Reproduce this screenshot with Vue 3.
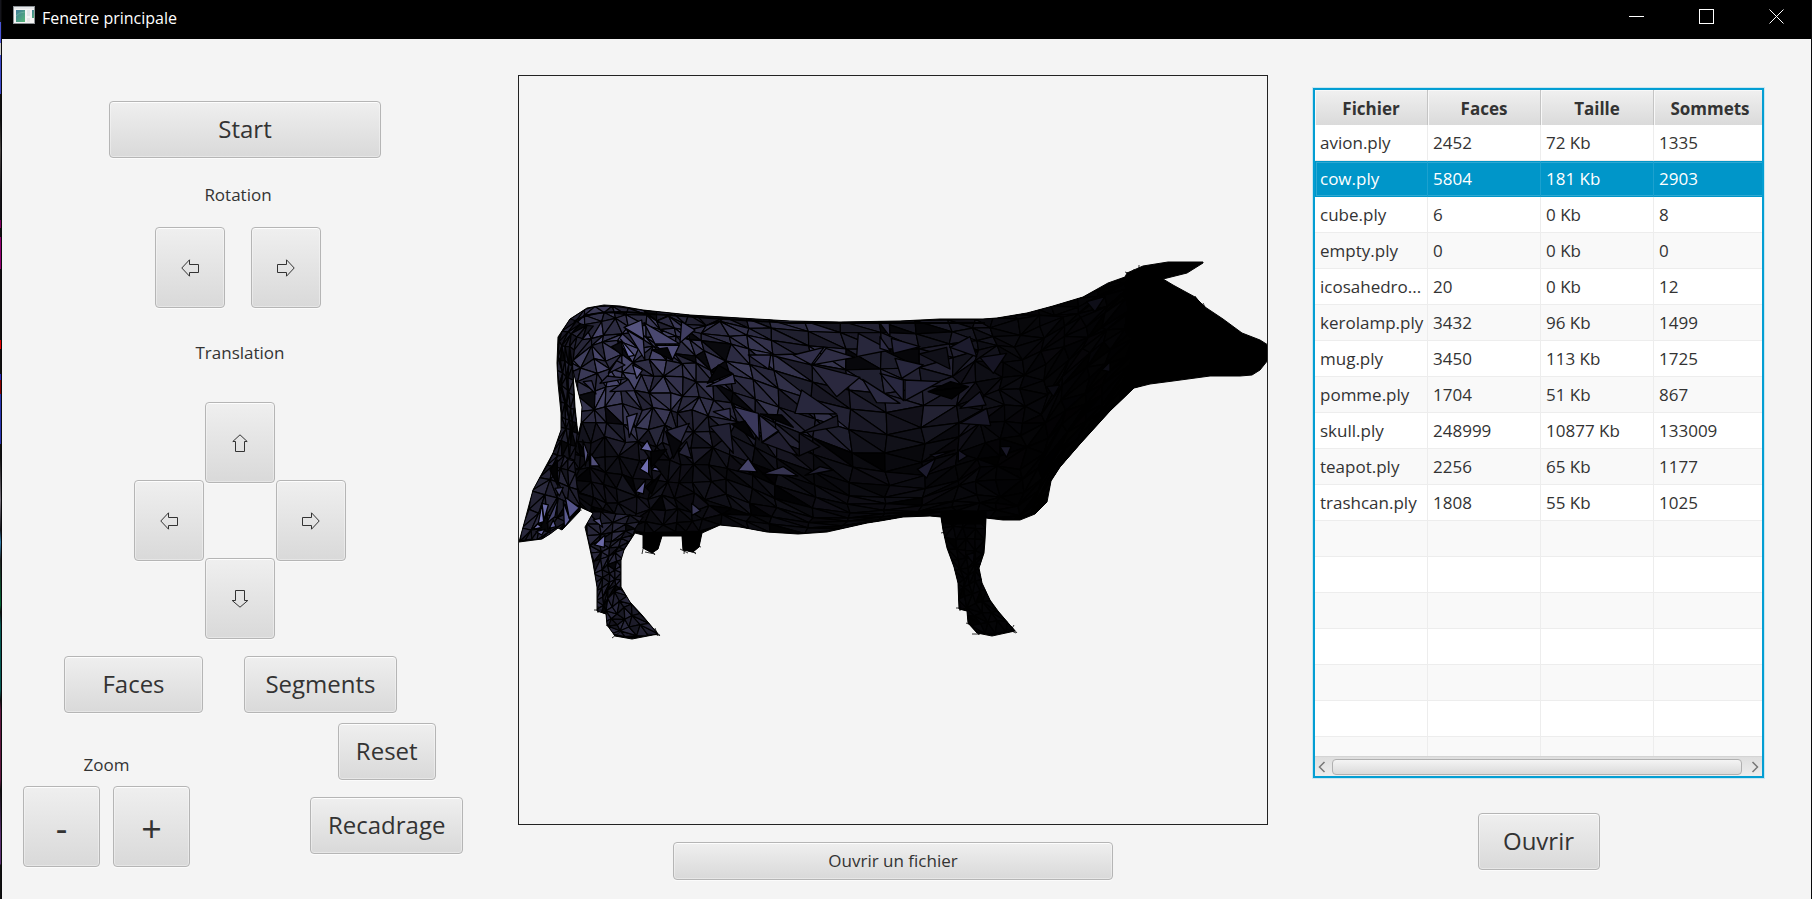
<script setup>
import { ref } from 'vue'

const columns = ['Fichier', 'Faces', 'Taille', 'Sommets']
const files = [
  ['avion.ply', '2452', '72 Kb', '1335'],
  ['cow.ply', '5804', '181 Kb', '2903'],
  ['cube.ply', '6', '0 Kb', '8'],
  ['empty.ply', '0', '0 Kb', '0'],
  ['icosahedro...', '20', '0 Kb', '12'],
  ['kerolamp.ply', '3432', '96 Kb', '1499'],
  ['mug.ply', '3450', '113 Kb', '1725'],
  ['pomme.ply', '1704', '51 Kb', '867'],
  ['skull.ply', '248999', '10877 Kb', '133009'],
  ['teapot.ply', '2256', '65 Kb', '1177'],
  ['trashcan.ply', '1808', '55 Kb', '1025'],
]
const emptyRows = 7
const selected = ref(1)

// Outline of the model, in scene coordinates
const outline =
  'M570 319L587 308L604 305L620 306L643 310L690 315L740 318L790 321L840 322L900 321L940 319L983 319L997 318L1027 313L1053 306L1083 297L1108 283L1125 277L1127 273L1143 266L1168 262L1203 262L1203 263L1187 273L1163 279L1173 285L1195 297L1205 307L1223 319L1242 333L1260 340L1268 345V360L1260 370L1252 375L1240 376L1210 376L1173 381L1150 384L1134 388L1110 411L1080 444L1060 467L1051 481L1047 502L1035 514L1020 520L1003 520L986 518L985 540L984 553L979 568L982 583L990 600L998 611L1015 631L992 636L977 633L968 623L967 611L959 609L958 583L954 567L947 548L943 530L941 517L930 516L903 517L880 521L867 523L827 532L798 534L767 532L740 527L720 525L702 533L699 547L693 552L683 550L682 536L662 536L658 549L652 553L643 548L643 535L635 533L624 550L621 560L621 587L630 602L642 615L658 634L632 639L615 636L607 625L606 614L597 611L597 587L593 563L588 540L585 527L593 513L580 507L580 511L562 530L558 528L550 534L542 539L519 542L525 520L533 490L553 453L561 430L561 413L558 383L557 363L558 337ZM573 370L577 387L582 407L581 423L578 435L575 407Z'

// Hair-thin edges that stick out of the silhouette
const spikes =
  'M594 610h10M598 606v7M606 625l5 3M612 638l8-6M655 628l3 8M646 634l14 1M652 627l8 9M638 612l4 3M642 554l2-10M645 552l10 2M652 551l3 4M684 554l1-12M680 549l8 4M688 551l8 2M690 549l6 5M697 546l4 1M580 505l1 6M956 608h6M960 604v7M966 623l5 2M972 634h8M976 630l3 5M1007 629l9 4M1010 632l4-7M1011 626l6 7M994 609l5 4M941 533l4-1M1125 272l6 2M1134 269v6M1139 265v5M1195 296l3 4M1203 303l2 4'

let state = 20117
const rnd = () => {
  state = (state * 1664525 + 1013904223) % 4294967296
  return state / 4294967296
}
const lerp = (a, b, t) => a + (b - a) * t
function curve(points, x) {
  for (let i = 1; i < points.length; i++) {
    if (x <= points[i][0]) {
      const [x0, y0] = points[i - 1]
      const [x1, y1] = points[i]
      return lerp(y0, y1, (x - x0) / (x1 - x0))
    }
  }
  return points[points.length - 1][1]
}
function along(points, t) {
  const f = Math.max(0, Math.min(0.9999, t)) * (points.length - 1)
  const i = Math.floor(f)
  return [lerp(points[i][0], points[i + 1][0], f - i), lerp(points[i][1], points[i + 1][1], f - i)]
}
const tint = (b) => `rgb(${Math.round(84 * b)},${Math.round(82 * b)},${Math.round(124 * b)})`

const facets = []
function addGrid(grid, light, lean) {
  for (let i = 0; i + 1 < grid.length; i++) {
    for (let j = 0; j + 1 < grid[i].length; j++) {
      const a = grid[i][j]
      const b = grid[i + 1][j]
      const c = grid[i + 1][j + 1]
      const d = grid[i][j + 1]
      const split = rnd() < lean(a[0]) ? [[a, b, c], [a, c, d]] : [[a, b, d], [b, c, d]]
      for (const t of split) {
        const x = (t[0][0] + t[1][0] + t[2][0]) / 3
        const y = (t[0][1] + t[1][1] + t[2][1]) / 3
        const r = rnd()
        const b0 = light(x, y) * (r < 0.06 ? 0.15 : 0.45 + 0.6 * r)
        facets.push({
          d: 'M' + t.map((p) => p[0].toFixed(1) + ' ' + p[1].toFixed(1)).join('L') + 'Z',
          fill: tint(b0),
        })
      }
    }
  }
}

const back = [[570, 319], [587, 308], [604, 305], [643, 310], [690, 315], [740, 318], [790, 321], [900, 321], [983, 319], [1027, 313], [1083, 297], [1125, 277], [1150, 266]]
const belly = [[570, 498], [593, 516], [635, 533], [702, 531], [720, 525], [767, 532], [798, 534], [827, 532], [880, 521], [941, 516], [1020, 520], [1047, 502], [1060, 467], [1110, 411], [1134, 388], [1150, 384]]
const glow = [[560, 0.8], [620, 0.95], [690, 0.72], [760, 0.68], [880, 0.56], [930, 0.46], [975, 0.34], [1000, 0.16], [1060, 0.08], [1110, 0.06], [1130, 0]]
const falloff = [[0, 0.8], [0.08, 1], [0.46, 0.92], [0.56, 0.6], [0.68, 0.3], [0.9, 0.3], [1, 0.2]]
// How far the rows of facets slide down along the flank
const slide = [[560, 10], [620, -14], [700, -10], [760, 8], [870, 52], [915, 50], [975, 8], [1140, 0]]
const slant = [[560, 0.6], [700, 0.7], [740, 1], [930, 1], [960, 0.6], [1140, 0.5]]

const steps = (from, to, n) => Array.from({ length: n }, (_, i) => lerp(from, to, i / n))
const stations = [...steps(556, 700, 10), ...steps(700, 768, 3), ...steps(768, 950, 5), ...steps(950, 1140, 9), 1140]
const rows = 16
const bodyGrid = stations.map((x, i) => {
  const jitter = x > 730 && x < 950 ? 4 : 7
  const column = []
  for (let j = 0; j <= rows; j++) {
    const v = j / rows
    const s = 0.5 * v + 0.5 * (3 * v * v - 2 * v * v * v)
    const px = x + (rnd() - 0.5) * jitter * 1.3 + 10 * Math.sin(v * 3)
    const inside = j > 0 && j < rows
    const py =
      lerp(curve(back, px), curve(belly, px), s) +
      curve(slide, px) * Math.sin(Math.PI * s) +
      (inside ? (rnd() - 0.5) * jitter : 0)
    column.push([px, py])
  }
  return column
})
const bodyLight = (x, y) => {
  const top = curve(back, x)
  return curve(glow, x) * curve(falloff, (y - top) / (curve(belly, x) - top))
}
addGrid(bodyGrid, bodyLight, (x) => curve(slant, x))

function limb(left, right, cols, count, light) {
  const grid = []
  for (let i = 0; i <= count; i++) {
    const l = along(left, i / count)
    const r = along(right, i / count)
    const line = []
    for (let j = 0; j <= cols; j++) {
      line.push([lerp(l[0], r[0], j / cols) + (rnd() - 0.5) * 3, lerp(l[1], r[1], j / cols) + (rnd() - 0.5) * 3])
    }
    grid.push(line)
  }
  addGrid(grid, () => light, () => 0.5)
}
limb([[588, 512], [588, 540], [593, 563], [597, 587], [597, 611], [607, 625], [615, 638]], [[642, 516], [635, 533], [624, 550], [621, 570], [621, 587], [634, 608], [658, 634]], 4, 15, 0.5)
limb([[570, 319], [558, 337], [557, 363], [558, 383], [561, 413], [561, 430], [553, 453]], [[592, 326], [574, 345], [572, 370], [574, 395], [576, 420], [577, 436], [574, 460]], 4, 10, 0.45)
limb([[553, 453], [543, 472], [533, 490], [525, 520], [519, 542]], [[574, 460], [575, 480], [580, 507], [562, 530], [542, 539]], 4, 6, 0.5)
limb([[941, 517], [947, 548], [958, 583], [959, 609], [977, 633]], [[986, 518], [984, 553], [979, 568], [990, 600], [1015, 631]], 4, 12, 0.07)

// Facets that catch the light, or fall in full shade, at three units per scene unit
const rear = [
  ['115,850 126,790 131,845', '#7f7fc4'], ['126,790 145,795 132,840', '#6a6aa8'], ['98,868 113,852 125,862', '#7575b0'],
  ['108,875 135,868 125,885', '#6868a0'], ['148,865 160,840 168,860', '#5f5f98'], ['190,785 193,862 210,840', '#5b5b90'],
  ['196,772 208,835 238,803', '#55558a'], ['165,745 190,742 178,768', '#3f3f63'], ['140,850 175,775 165,830', '#45456e'],
  ['362,298 385,350 403,346', '#6767a0'], ['432,248 540,312 465,312', '#4a4870'], ['465,315 538,316 518,358', '#504e78'],
  ['372,262 425,240 432,298', '#55537f'], ['380,270 430,300 435,360', '#4b4972'], ['398,375 428,390 410,416', '#5b5988'],
  ['380,530 412,520 388,592', '#4a4870'], ['442,602 422,628 458,635', '#6563a0'], ['420,687 446,650 446,702', '#6f6dae'],
  ['407,755 437,720 430,762', '#5b5990'], ['455,690 465,678 482,695', '#5f5d95'], ['283,915 315,885 313,922', '#6a68a5'],
  ['248,600 264,640 256,678', '#55537f'], ['272,640 299,678 272,678', '#504e78'], ['280,840 300,835 308,862', '#53517d'],
  ['500,572 568,550 540,612', '#2b2a42'], ['810,345 890,342 930,374', '#33314c'], ['880,345 972,322 934,374', '#302e48'],
  ['940,374 978,325 1065,352', '#2f2d45'], ['745,345 812,345 806,388', '#343250'], ['700,500 778,600 775,520', '#39375a'],
  ['778,525 836,572 786,606', '#33314d'], ['620,440 700,402 706,430', '#3a3858'], ['714,692 745,655 772,696', '#45436a'],
  ['788,702 850,680 894,708', '#34324e'], ['932,374 1080,412 1010,470', '#2a283e'], ['885,520 1010,522 905,450', '#28273d'],
  ['900,580 1012,526 1015,560', '#1a1926'], ['1088,418 1200,490 1130,488', '#2a2940'], ['1075,280 1170,330 1070,350', '#28273c'],
  ['915,706 960,680 1000,690', '#201f32'], ['575,790 602,812 576,826', '#3a3858'], ['535,640 560,605 575,655', '#252438'],
  ['455,330 502,323 518,361', '#050508'], ['622,430 655,375 697,400', '#050508'], ['694,552 735,543 766,600', '#030305'],
  ['452,635 500,628 455,682', '#030305'], ['440,745 482,703 455,762', '#030305'], ['335,320 365,305 368,347', '#0a0a10'],
  ['780,522 845,525 880,562', '#040406'], ['497,575 545,608 520,655', '#07070b'], ['150,690 172,660 172,735', '#020203'],
  ['786,608 836,575 895,648', '#1f1d2e'], ['898,580 960,620 898,648', '#15141f'], ['640,515 690,505 692,540', '#353352'],
  ['630,560 690,550 700,640', '#222134'], ['545,245 585,270 540,308', '#3f3d60'], ['300,430 322,408 382,415', '#302e49'],
  ['330,455 385,418 405,452', '#33314d'], ['325,400 350,362 375,375', '#363450'], ['250,425 275,422 288,462', '#373553'],
]
const front = [
  ['75,420 180,425 75,482', '#25243a'], ['0,400 70,420 70,482', '#28273f'], ['45,355 130,375 65,415', '#27263c'],
  ['0,290 32,335 0,325', '#2c2a43'], ['34,295 120,320 40,340', '#24233a'], ['0,250 28,248 30,290', '#2a2940'],
  ['145,455 212,425 265,440', '#020203'], ['145,455 265,440 215,477', '#020203'], ['112,688 167,655 140,714', '#1c1b2e'],
  ['118,342 200,322 210,387', '#101018'], ['240,505 318,495 300,455', '#1b1a2b'], ['240,550 320,505 332,557', '#181726'],
  ['360,620 393,620 380,652', '#191828'], ['150,645 225,630 165,652', '#1a192a'], ['235,630 262,648 235,665', '#181727'],
  ['210,322 290,350 270,290', '#1c1b2d'], ['300,352 380,340 340,400', '#161524'], ['665,390 690,365 690,395', '#0d0d16'],
  ['620,185 675,170 645,215', '#0e0e18'], ['500,440 540,435 520,470', '#0a0a11'], ['260,945 283,938 280,970', '#08080d'],
]
</script>

<template>
  <div class="desktop">
    <div class="window">
      <header class="titlebar">
        <svg class="app-icon" viewBox="0 0 22 18" aria-hidden="true">
          <defs>
            <linearGradient id="pane" x1="0" y1="0" x2="1" y2="1">
              <stop offset="0" stop-color="#3f7b99" />
              <stop offset="1" stop-color="#58b878" />
            </linearGradient>
          </defs>
          <rect x="0.5" y="0.5" width="21" height="17" fill="#f4f4f4" stroke="#8d9296" />
          <path d="M1 2h20" stroke="#d5d9dc" />
          <rect x="3" y="4" width="9" height="12" fill="url(#pane)" />
          <path d="M3 10q3-4 9-4" stroke="#7fc0a8" fill="none" opacity=".5" />
          <rect x="14" y="4" width="3" height="6" fill="#e2e6e8" />
          <rect x="19" y="4" width="2" height="8" fill="url(#pane)" />
          <rect x="14" y="12" width="3" height="4" fill="#e6e6e6" />
        </svg>
        <h1>Fenetre principale</h1>
        <div class="window-controls">
          <button type="button" aria-label="Réduire">
            <svg viewBox="0 0 15 15"><path d="M0 7.5h15" /></svg>
          </button>
          <button type="button" aria-label="Agrandir">
            <svg viewBox="0 0 15 15"><rect x="0.5" y="0.5" width="14" height="14" /></svg>
          </button>
          <button type="button" aria-label="Fermer">
            <svg viewBox="0 0 15 15"><path d="M0.5 0.5l14 14M14.5 0.5l-14 14" /></svg>
          </button>
        </div>
      </header>

      <main class="content">
        <section class="controls">
          <button type="button" class="btn large start">Start</button>

          <div class="rotation">
            <h2>Rotation</h2>
            <div class="pair">
              <button type="button" class="btn arrow" aria-label="Rotation à gauche">
                <svg viewBox="0 0 18 18"><path d="M0.8 9L8.5 0.8V5.5H17.5V13.5H8.5V17.2Z" /></svg>
              </button>
              <button type="button" class="btn arrow" aria-label="Rotation à droite">
                <svg viewBox="0 0 18 18"><path d="M17.2 9L9.5 0.8V5.5H0.5V13.5H9.5V17.2Z" /></svg>
              </button>
            </div>
          </div>

          <div class="translation">
            <h2>Translation</h2>
            <div class="dpad">
              <button type="button" class="btn arrow up" aria-label="Haut">
                <svg viewBox="0 0 18 18"><path d="M9 0.8L16.2 7.5H13.5V17.5H4.5V7.5H1.8Z" /></svg>
              </button>
              <button type="button" class="btn arrow left" aria-label="Gauche">
                <svg viewBox="0 0 18 18"><path d="M0.8 9L8.5 0.8V5.5H17.5V13.5H8.5V17.2Z" /></svg>
              </button>
              <button type="button" class="btn arrow right" aria-label="Droite">
                <svg viewBox="0 0 18 18"><path d="M17.2 9L9.5 0.8V5.5H0.5V13.5H9.5V17.2Z" /></svg>
              </button>
              <button type="button" class="btn arrow down" aria-label="Bas">
                <svg viewBox="0 0 18 18"><path d="M9 17.2L16.8 10.5H13.5V0.5H4.5V10.5H1.2Z" /></svg>
              </button>
            </div>
          </div>

          <div class="modes">
            <button type="button" class="btn large faces">Faces</button>
            <button type="button" class="btn large segments">Segments</button>
          </div>

          <div class="bottom">
            <div class="zoom">
              <h2>Zoom</h2>
              <div class="zoom-buttons">
                <button type="button" class="btn sign">-</button>
                <button type="button" class="btn sign">+</button>
              </div>
            </div>
            <div class="resets">
              <button type="button" class="btn large">Reset</button>
              <button type="button" class="btn large">Recadrage</button>
            </div>
          </div>
        </section>

        <section class="viewer">
          <svg class="scene" viewBox="519 76 748 748" role="img" aria-label="cow.ply">
            <defs>
              <clipPath id="hull"><path :d="outline" clip-rule="evenodd" /></clipPath>
            </defs>
            <path :d="outline" fill-rule="evenodd" fill="#000" />
            <g clip-path="url(#hull)" stroke="#000" stroke-width="1.2" stroke-linejoin="round">
              <path v-for="(f, i) in facets" :key="i" :d="f.d" :fill="f.fill" />
              <g transform="translate(500 240) scale(0.3333)" stroke-width="4">
                <polygon v-for="(f, i) in rear" :key="i" :points="f[0]" :fill="f[1]" />
              </g>
              <g transform="translate(880 240) scale(0.3333)" stroke-width="4">
                <polygon v-for="(f, i) in front" :key="i" :points="f[0]" :fill="f[1]" />
              </g>
              <path d="M643 533H704V556H640ZM941 512H986V524H941Z" fill="#000" />
            </g>
            <path :d="outline" fill="none" stroke="#000" stroke-width="1" stroke-linejoin="round" />
            <path d="M574 322Q590 309 640 313T790 323H985" fill="none" stroke="#000" stroke-width="2" />
            <path :d="spikes" fill="none" stroke="#000" stroke-width="0.8" />
          </svg>
          <button type="button" class="btn open-file">Ouvrir un fichier</button>
        </section>

        <section class="library">
          <div class="table-frame">
            <div class="table-view">
              <table>
                <thead>
                  <tr>
                    <th v-for="c in columns" :key="c" scope="col">{{ c }}</th>
                  </tr>
                </thead>
                <tbody>
                  <tr v-for="(row, i) in files" :key="row[0]" :class="{ selected: i === selected }" @click="selected = i">
                    <td v-for="(cell, j) in row" :key="j">{{ cell }}</td>
                  </tr>
                  <tr v-for="n in emptyRows" :key="'empty' + n">
                    <td v-for="c in columns" :key="c"></td>
                  </tr>
                </tbody>
              </table>
            </div>
            <div class="scrollbar">
              <button type="button" aria-label="Défiler à gauche">
                <svg viewBox="0 0 8 12"><path d="M6.5 1L1.5 6L6.5 11" /></svg>
              </button>
              <div class="thumb"></div>
              <button type="button" aria-label="Défiler à droite">
                <svg viewBox="0 0 8 12"><path d="M1.5 1L6.5 6L1.5 11" /></svg>
              </button>
            </div>
          </div>
          <button type="button" class="btn large open">Ouvrir</button>
        </section>
      </main>
    </div>
  </div>
</template>

<style>
html,
body {
  margin: 0;
  background: #000;
}
</style>

<style scoped>
.desktop {
  box-sizing: border-box;
  min-height: 100vh;
  display: flex;
  padding: 0 1px 0 2px;
  font-family: 'Open Sans', 'Noto Sans', sans-serif;
  font-size: 17px;
  line-height: 24px;
  color: #333;
  background:
    linear-gradient(#15151c 0 22px, #4a55d8 22px 43px, #ccc 43px 55px, #3c48c8 55px 94px, #111 94px 120px, #4a4644 150px, #18161a 190px, #101014 220px, #800060 220px 228px, #111 228px 237px, #900070 237px 269px, #111 269px 340px, #e00000 340px 349px, #111 349px 374px, #2c2cc0 374px 380px, #800 380px 394px, #2a35b0 394px 444px, #111 444px 458px, #77717c 500px, #15151a 530px, #3080b0 542px, #222 560px, #063 605px, #111 612px, #065a55 625px 690px, #111 700px, #601840 710px 780px, #111 790px, #5a3070 835px 864px, #111 865px) 0 0 / 1px 100% no-repeat,
    #0a0a0c;
}
.window {
  flex: 1;
  min-width: 0;
  display: flex;
  flex-direction: column;
  background: #f4f4f4;
}
.titlebar {
  display: flex;
  align-items: flex-start;
  height: 39px;
  background: #000;
  color: #fff;
}
.app-icon {
  width: 22px;
  height: 18px;
  margin: 6px 7px 0 11px;
}
h1 {
  flex: 1;
  margin: 6px 0 0;
  font-size: 16px;
  font-weight: 400;
}
.window-controls {
  display: flex;
}
.window-controls button {
  display: flex;
  align-items: center;
  justify-content: center;
  width: 70px;
  height: 33px;
  padding: 0;
  border: 0;
  background: none;
}
.window-controls svg {
  width: 15px;
  height: 15px;
  fill: none;
  stroke: #fff;
  stroke-width: 1;
}
.content {
  flex: 1;
  display: grid;
  grid-template-columns: minmax(0, 516fr) minmax(0, 750fr) minmax(0, 543fr);
  align-items: start;
}
h2 {
  margin: 0;
  font-size: 17px;
  font-weight: 400;
  text-align: center;
}
.btn {
  box-sizing: border-box;
  display: flex;
  align-items: center;
  justify-content: center;
  border: 1px solid #b5b5b5;
  border-radius: 4px;
  padding: 0 18px;
  background: linear-gradient(#efefef, #d9d9d9);
  box-shadow:
    inset 0 0 0 1px rgba(255, 255, 255, 0.35),
    inset 0 1px 0 #fcfcfc,
    0 1px 0 #fbfbfb;
  color: #333;
  font-family: inherit;
  font-size: 17px;
  line-height: 24px;
}
.large {
  height: 57px;
  padding: 0 17px 2px;
  font-size: 24px;
  line-height: 32px;
}
.arrow {
  width: 70px;
  height: 81px;
  padding: 0;
}
.arrow svg {
  width: 18px;
  height: 18px;
  fill: none;
  stroke: #333;
  stroke-width: 1;
}
.controls {
  display: flex;
  flex-direction: column;
  align-items: flex-start;
  padding-top: 62px;
}
.start {
  width: 272px;
  margin-left: 107px;
}
.rotation {
  margin: 25px 0 0 153px;
}
.pair {
  display: flex;
  gap: 26px;
  margin-top: 20px;
}
.translation {
  margin: 33px 0 0 132px;
}
.dpad {
  display: grid;
  grid-template-columns: repeat(3, 70px);
  grid-template-rows: repeat(3, 78px);
  column-gap: 1px;
  margin-top: 37px;
}
.up {
  grid-area: 1 / 2;
}
.left {
  grid-area: 2 / 1;
}
.right {
  grid-area: 2 / 3;
}
.down {
  grid-area: 3 / 2;
}
.modes {
  display: flex;
  gap: 41px;
  margin: 20px 0 0 62px;
}
.faces {
  width: 139px;
}
.segments {
  width: 153px;
}
.bottom {
  display: flex;
  gap: 120px;
  margin: 10px 0 32px 21px;
}
.zoom {
  padding-top: 30px;
}
.zoom-buttons {
  display: flex;
  gap: 13px;
  margin-top: 9px;
}
.sign {
  width: 77px;
  height: 81px;
  padding: 4px 0 0;
  font-size: 36px;
  line-height: 40px;
}
.resets {
  display: flex;
  flex-direction: column;
  align-items: center;
  gap: 17px;
}
.viewer {
  display: flex;
  flex-direction: column;
  align-items: center;
  gap: 17px;
  padding-top: 36px;
}
.scene {
  box-sizing: border-box;
  display: block;
  width: 100%;
  aspect-ratio: 1;
  border: 1px solid #222;
}
.open-file {
  width: 440px;
  height: 38px;
}
.library {
  display: flex;
  flex-direction: column;
  align-items: center;
  gap: 35px;
  padding: 49px 47px 0 45px;
}
.table-frame {
  box-sizing: border-box;
  width: 100%;
  border: 2px solid #039ed3;
  box-shadow: 0 0 0 1px #c9e6f0;
}
.table-view {
  height: 666px;
  overflow: hidden;
  background: #fff;
}
table {
  width: 452px;
  border-collapse: separate;
  border-spacing: 0;
  table-layout: fixed;
}
th {
  box-sizing: border-box;
  height: 35px;
  padding: 2px 10px 0;
  border-right: 1px solid #c4c4c4;
  background: linear-gradient(#f0f0f0, #dadada);
  box-shadow: inset 1px 1px 0 #f8f8f8;
  font-weight: 700;
  white-space: nowrap;
}
td {
  box-sizing: border-box;
  height: 36px;
  padding: 0 4px 0 5px;
  border-right: 1px solid #ededed;
  border-bottom: 1px solid #ededed;
  background: #fff;
  white-space: nowrap;
}
tr:nth-child(even) td {
  background: #f9f9f9;
}
tbody .selected td {
  border-right-color: #1ca1cf;
  border-bottom-color: #0096c9;
  background: #0096c9;
  box-shadow:
    inset 0 1px 0 #0096c9,
    inset 0 2px 0 #2fa8d2,
    inset 0 -1px 0 #2fa8d2;
  color: #fff;
}
tbody .selected td:first-child {
  box-shadow:
    inset 1px 1px 0 #0096c9,
    inset 2px 2px 0 #2fa8d2,
    inset 0 -1px 0 #2fa8d2;
}
.scrollbar {
  box-sizing: border-box;
  display: flex;
  align-items: center;
  height: 20px;
  border-top: 1px solid #d4d4d4;
  background: linear-gradient(#dedede, #ededed);
}
.scrollbar button {
  display: flex;
  padding: 0 3px;
  border: 0;
  background: none;
}
.scrollbar svg {
  width: 8px;
  height: 12px;
  fill: none;
  stroke: #777;
  stroke-width: 1.5;
}
.thumb {
  box-sizing: border-box;
  flex: 1;
  height: 16px;
  margin: 0 6px 0 3px;
  border: 1px solid #b0b0b0;
  border-radius: 4px;
  background: linear-gradient(#f4f4f4, #dadada);
}
.open {
  width: 122px;
}
</style>
